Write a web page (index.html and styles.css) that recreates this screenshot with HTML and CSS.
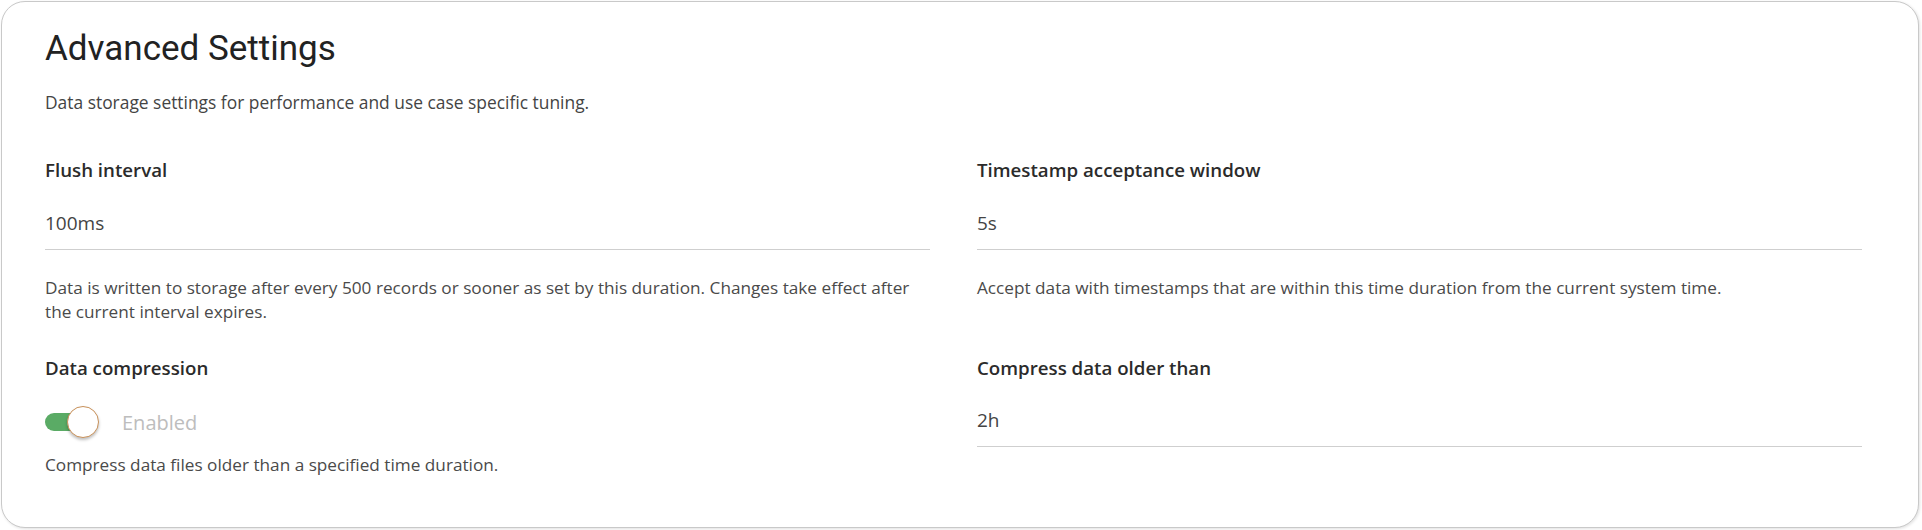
FILE: index.html
```html
<!DOCTYPE html>
<html>
<head>
  <meta charset="UTF-8">
  <title>Advanced Settings</title>
  <link rel="stylesheet" href="styles.css">
</head>
<body>
  <div class="settings-card">
    <h1 class="settings-title">Advanced Settings</h1>
    <p class="settings-subtitle">Data storage settings for performance and use case specific tuning.</p>

    <div class="settings-grid">
      <div class="field">
        <label class="field-label" for="flushInterval">Flush interval</label>
        <input type="text" class="field-input" id="flushInterval" value="100ms">
        <div class="field-help">Data is written to storage after every 500 records or sooner as set by this duration. Changes take effect after the current interval expires.</div>
      </div>

      <div class="field">
        <label class="field-label" for="tsWindow">Timestamp acceptance window</label>
        <input type="text" class="field-input" id="tsWindow" value="5s">
        <div class="field-help">Accept data with timestamps that are within this time duration from the current system time.</div>
      </div>

      <div class="field">
        <div class="field-label">Data compression</div>
        <div class="toggle-row">
          <span class="toggle on"><span class="toggle-knob"></span></span>
          <span class="toggle-text">Enabled</span>
        </div>
        <div class="field-help help-tight">Compress data files older than a specified time duration.</div>
      </div>

      <div class="field">
        <label class="field-label" for="compressAge">Compress data older than</label>
        <input type="text" class="field-input input-second" id="compressAge" value="2h">
      </div>
    </div>
  </div>
</body>
</html>
```

FILE: styles.css
```css
html, body {
  margin: 0;
  padding: 0;
  background: #fff;
}
body {
  font-family: "Open Sans", "Noto Sans", Arial, sans-serif;
  color: #333;
  height: 530px;
  overflow: hidden;
}
.settings-card {
  box-sizing: border-box;
  height: 527px;
  margin: 1px 3px 2px 1px;
  padding: 27px 56px 0 43px;
  border: 1px solid #c9c9c9;
  border-radius: 24px;
  box-shadow: 1px 1px 3px rgba(0,0,0,0.12);
  background: #fff;
}
.settings-title {
  margin: 0;
  font-family: Roboto, "Noto Sans", sans-serif;
  font-weight: 400;
  font-size: 35px;
  line-height: 40px;
  color: #222;
}
.settings-subtitle {
  margin: 21px 0 0;
  font-size: 17.4px;
  line-height: 24px;
  color: #444;
}

.settings-grid {
  display: grid;
  grid-template-columns: 1fr 1fr;
  column-gap: 47px;
  row-gap: 32px;
  margin-top: 44px;
}
.field {
  display: flex;
  flex-direction: column;
}
.field-label {
  font-size: 18.7px;
  font-weight: 600;
  line-height: 24px;
  color: #2b2b2b;
}
.field-input {
  box-sizing: border-box;
  width: 100%;
  margin: 0;
  padding: 29px 0 14px;
  border: none;
  border-bottom: 1px solid #cfcfcf;
  font-family: inherit;
  font-size: 19px;
  line-height: 24px;
  height: 68px;
  color: #444;
  background: transparent;
  outline: none;
}
.input-second {
  padding-top: 28px;
  height: 67px;
}
.field-help {
  margin-top: 26px;
  font-size: 17.2px;
  line-height: 24px;
  color: #4a4a4a;
}
.help-tight {
  margin-top: 15px;
}

.toggle-row {
  display: flex;
  align-items: center;
  height: 32px;
  margin-top: 26px;
}
.toggle {
  position: relative;
  display: inline-block;
  width: 50px;
  height: 18px;
  border-radius: 9px;
  background-color: #e0e0e0;
}
.toggle.on {
  background-color: #5aab65;
}
.toggle-knob {
  position: absolute;
  top: -7px;
  left: 22px;
  box-sizing: border-box;
  width: 32px;
  height: 32px;
  border-radius: 50%;
  background: #fff;
  border: 1.5px solid #c8915a;
  box-shadow: 0 2px 3px rgba(0,0,0,0.25);
}
.toggle-text {
  margin-left: 27px;
  font-size: 20px;
  color: #bdbdbd;
}
```
